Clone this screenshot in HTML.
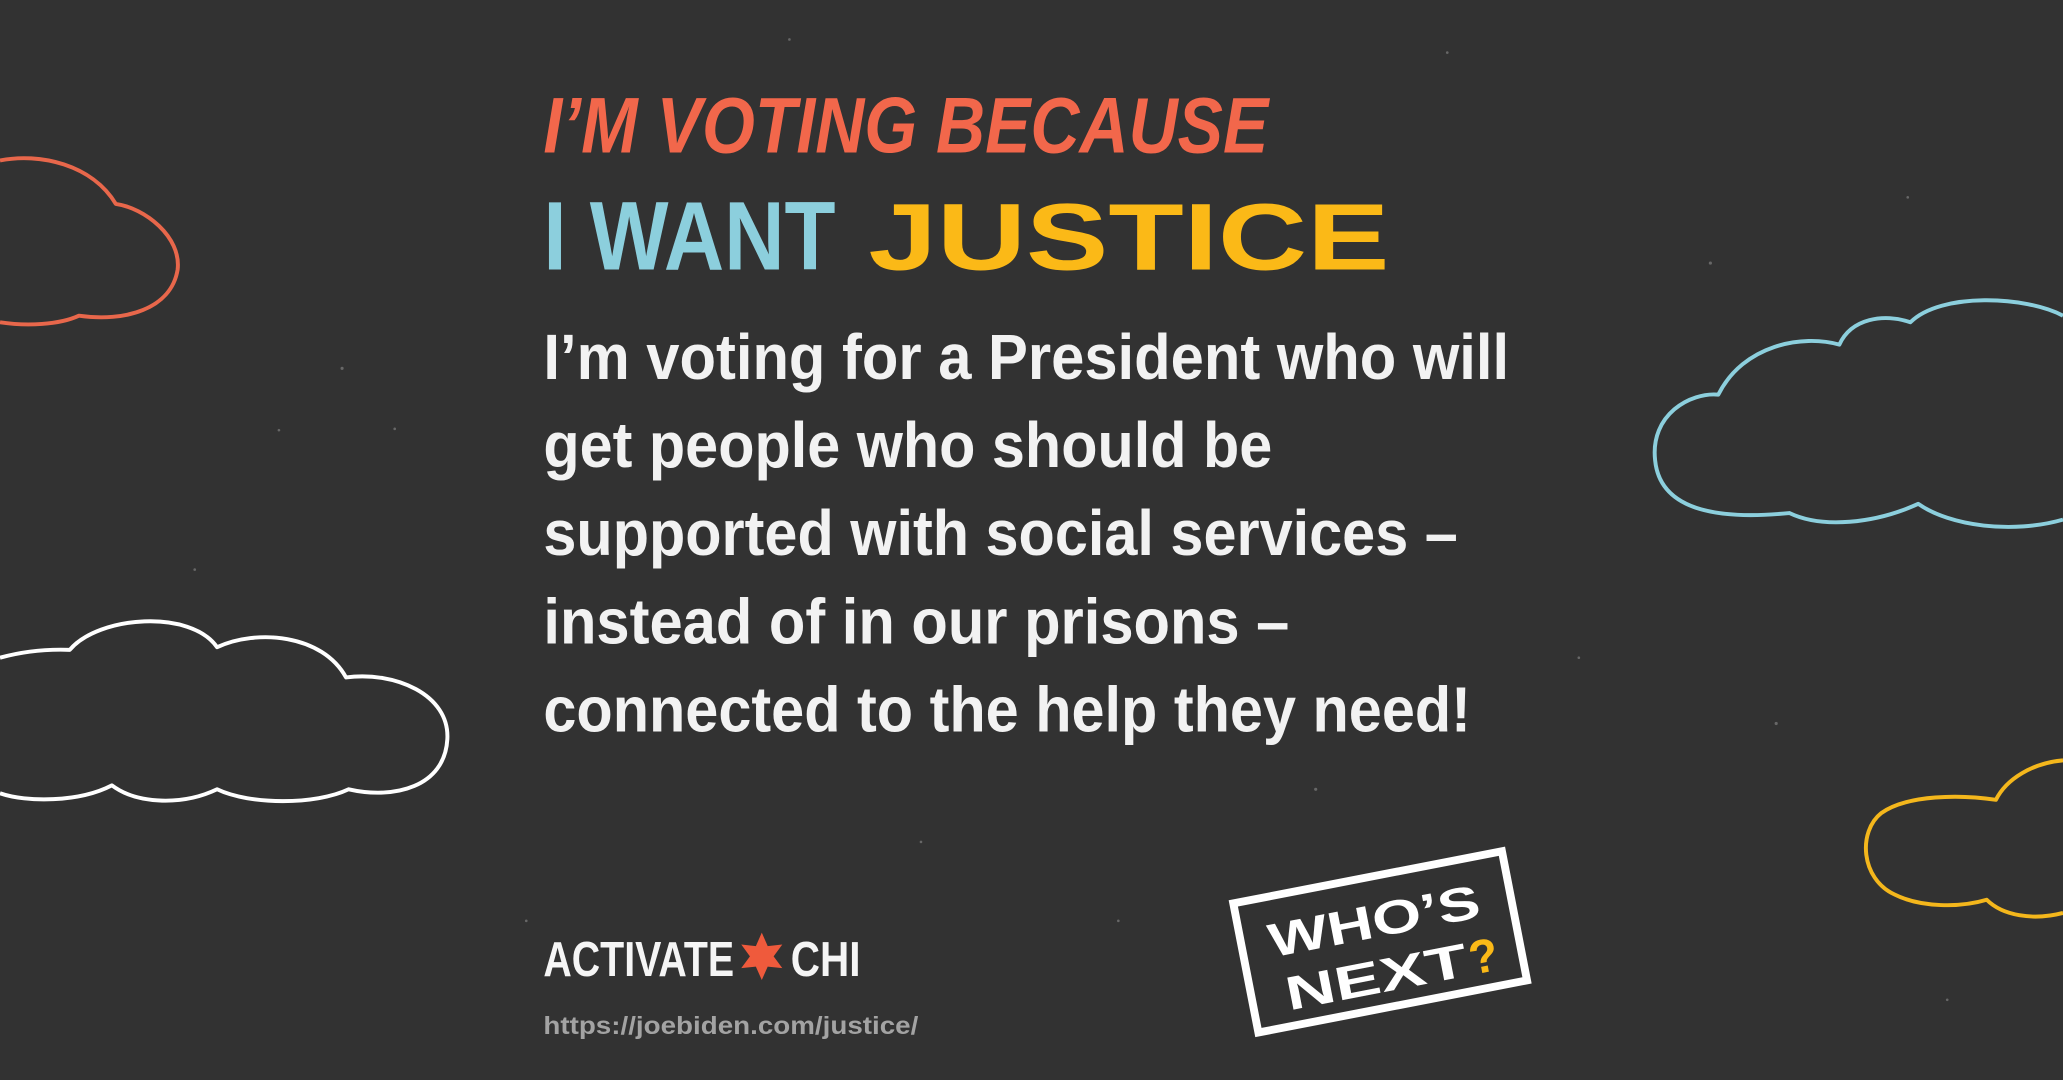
<!DOCTYPE html>
<html><head><meta charset="utf-8"><style>
html,body{margin:0;padding:0;background:#333;}
svg{display:block;width:2063px;height:1080px;}
</style></head><body>
<svg viewBox="0 0 1568 821" preserveAspectRatio="none" xmlns="http://www.w3.org/2000/svg">
<rect width="1568" height="821" fill="#323232"/>
<g fill="#8a8a8a" opacity="0.6">
<circle cx="260" cy="280" r="1.2"/><circle cx="300" cy="326" r="1"/><circle cx="212" cy="327" r="1"/><circle cx="148" cy="433" r="1"/><circle cx="1300" cy="200" r="1.2"/><circle cx="1450" cy="150" r="1"/><circle cx="1200" cy="500" r="1"/><circle cx="1350" cy="550" r="1.2"/><circle cx="700" cy="640" r="1"/><circle cx="850" cy="700" r="1"/><circle cx="1000" cy="600" r="1.2"/><circle cx="400" cy="700" r="1"/><circle cx="1480" cy="760" r="1"/><circle cx="1100" cy="40" r="1"/><circle cx="600" cy="30" r="1"/>
</g>
<g fill="none" stroke-width="3" stroke-linejoin="round">
<path stroke="#e8674b" d="M0,122 C30,116 70,125 88,155 C110,158 138,180 135,205 C130,235 95,245 60,240 C45,247 20,248 0,245"/>
<path stroke="#ffffff" d="M0,500 Q25,493 53,494 C75,468 145,463 165,492 C195,478 245,482 263,515 C300,510 342,528 340,562 C338,598 300,608 265,600 C240,612 190,612 165,600 C140,612 105,612 85,597 C60,610 20,610 0,603"/>
<path stroke="#8ccfdd" d="M1568,240 C1540,225 1475,222 1452,245 C1432,238 1407,242 1398,262 C1370,254 1325,262 1306,300 C1285,298 1254,315 1258,350 C1262,390 1310,395 1360,390 C1385,402 1425,398 1458,383 C1482,400 1530,406 1568,395"/>
<path stroke="#f4b71c" d="M1568,578 C1545,580 1525,592 1517,608 C1490,604 1450,604 1430,618 C1412,632 1414,668 1440,680 C1460,690 1490,690 1510,684 C1522,696 1545,700 1568,694"/>
</g>
<g font-family="Liberation Sans, sans-serif" font-weight="bold">
<text x="413" y="116" font-size="60" font-style="italic" fill="#f2674b" textLength="551" lengthAdjust="spacingAndGlyphs">I’M VOTING BECAUSE</text>
<text x="413" y="205" font-size="74" fill="#8ccfdd" textLength="222" lengthAdjust="spacingAndGlyphs">I WANT</text>
<text x="660" y="205" font-size="72" fill="#fbb917" textLength="396" lengthAdjust="spacingAndGlyphs">JUSTICE</text>
<g font-size="49" fill="#f2f2f2">
<text x="413" y="288" textLength="734" lengthAdjust="spacingAndGlyphs">I’m voting for a President who will</text>
<text x="413" y="355" textLength="554" lengthAdjust="spacingAndGlyphs">get people who should be</text>
<text x="413" y="422" textLength="695" lengthAdjust="spacingAndGlyphs">supported with social services –</text>
<text x="413" y="489" textLength="567" lengthAdjust="spacingAndGlyphs">instead of in our prisons –</text>
<text x="413" y="556" textLength="705" lengthAdjust="spacingAndGlyphs">connected to the help they need!</text>
</g>
<text x="413" y="742" font-size="37" fill="#f5f5f5" textLength="145" lengthAdjust="spacingAndGlyphs">ACTIVATE</text>
<text x="601" y="742" font-size="37" fill="#f5f5f5" textLength="53" lengthAdjust="spacingAndGlyphs">CHI</text>
<text x="413" y="786" font-size="19" fill="#a3a3a3" textLength="285" lengthAdjust="spacingAndGlyphs">https://joebiden.com/justice/</text>
</g>
<polygon fill="#ef5a3c" points="579,709 583.5,719.2 594.6,718 588,727 594.6,736 583.5,734.8 579,745 574.5,734.8 563.4,736 570,727 563.4,718 574.5,719.2"/>
<g transform="translate(1049,716) rotate(-11)">
<rect x="-104" y="-50" width="208" height="100" fill="#323232" stroke="#fff" stroke-width="6"/>
<g font-family="Liberation Sans, sans-serif" font-weight="bold" font-size="36" fill="#fff">
<text x="-83" y="-4" textLength="163" lengthAdjust="spacingAndGlyphs">WHO’S</text>
<text x="-78" y="38" textLength="140" lengthAdjust="spacingAndGlyphs">NEXT</text>
<text x="64" y="38" fill="#fbb917" textLength="22" lengthAdjust="spacingAndGlyphs">?</text>
</g>
</g>
</svg>
</body></html>
